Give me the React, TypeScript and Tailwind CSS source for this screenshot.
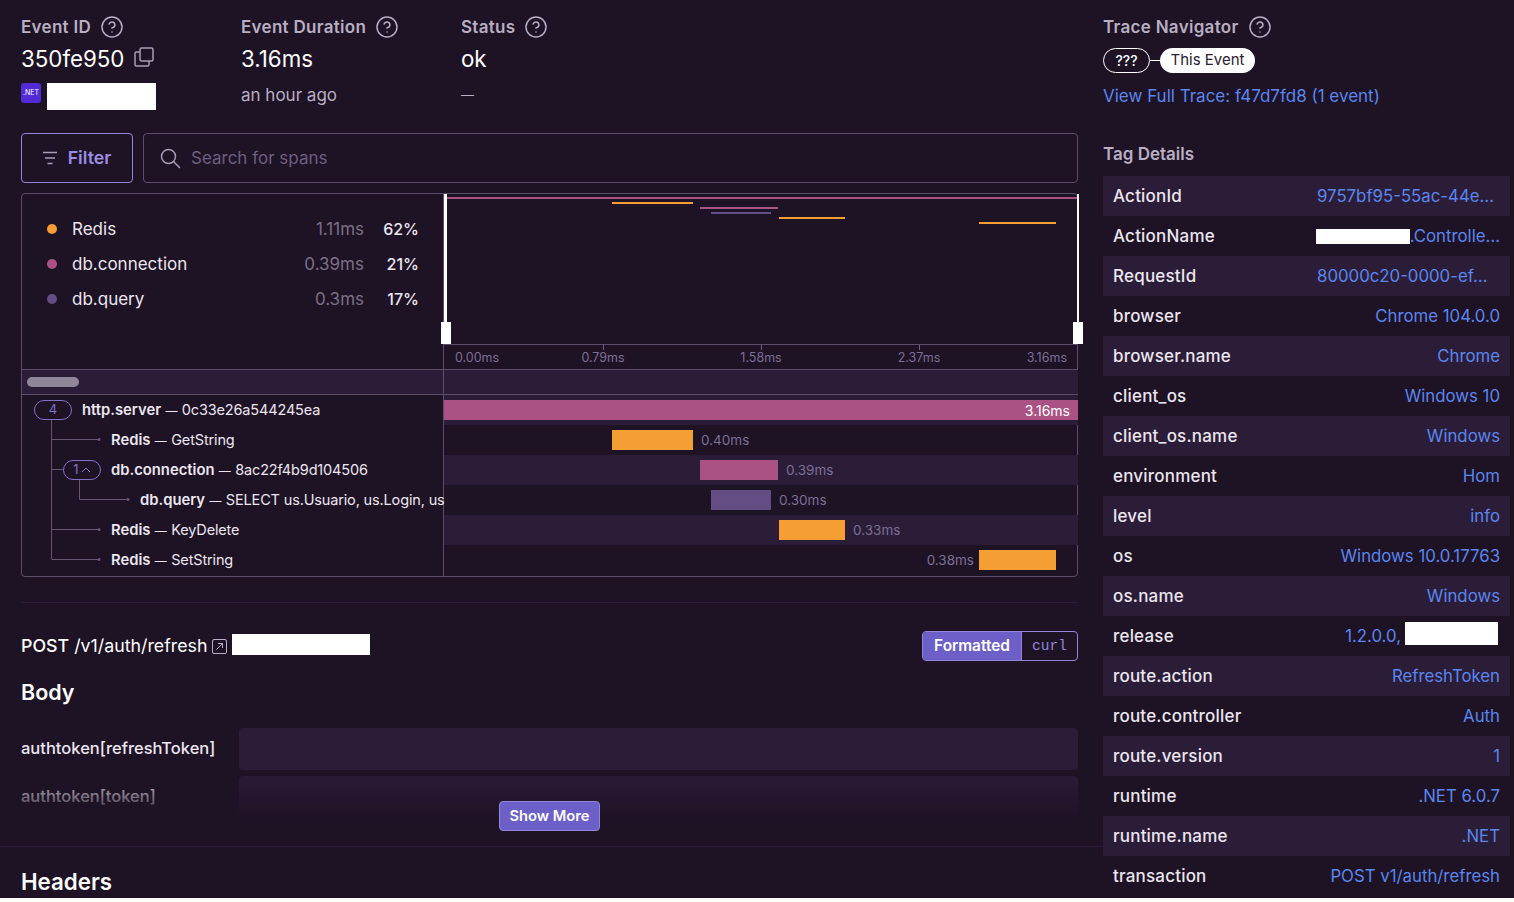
import { CircleHelp } from 'lucide-react';

const tags: { name: string; value: string }[] = [
  { name: 'ActionId', value: '9757bf95-55ac-44e…' },
  { name: 'ActionName', value: '.Controlle…' },
  { name: 'RequestId', value: '80000c20-0000-ef…' },
  { name: 'browser', value: 'Chrome 104.0.0' },
  { name: 'browser.name', value: 'Chrome' },
  { name: 'client_os', value: 'Windows 10' },
  { name: 'client_os.name', value: 'Windows' },
  { name: 'environment', value: 'Hom' },
  { name: 'level', value: 'info' },
  { name: 'os', value: 'Windows 10.0.17763' },
  { name: 'os.name', value: 'Windows' },
  { name: 'release', value: '1.2.0.0,' },
  { name: 'route.action', value: 'RefreshToken' },
  { name: 'route.controller', value: 'Auth' },
  { name: 'route.version', value: '1' },
  { name: 'runtime', value: '.NET 6.0.7' },
  { name: 'runtime.name', value: '.NET' },
  { name: 'transaction', value: 'POST v1/auth/refresh' },
];

const legend = [
  { name: 'Redis', time: '1.11ms', pct: '62%', dot: 'bg-[#f59e33]' },
  { name: 'db.connection', time: '0.39ms', pct: '21%', dot: 'bg-[#a95283]' },
  { name: 'db.query', time: '0.3ms', pct: '17%', dot: 'bg-[#634d84]' },
];

function Help() {
  return <CircleHelp size={24} strokeWidth={1.5} className="text-[#b8afc2] -my-[2px]" />;
}

function Label({ text }: { text: string }) {
  return (
    <div className="flex items-center gap-[9px] h-5 text-[17px] leading-6 font-semibold tracking-[0.3px] text-[#b8afc2]">
      {text}
      <Help />
    </div>
  );
}

function Minimap() {
  return (
    <svg width="634" height="150" className="block overflow-visible">
      <rect x="3" y="3" width="631" height="2" fill="#a95283" />
      <rect x="168" y="8" width="81" height="2" fill="#f59e33" />
      <rect x="256" y="13" width="78" height="2" fill="#a95283" />
      <rect x="267" y="18" width="60" height="2" fill="#634d84" />
      <rect x="335" y="23" width="66" height="2" fill="#f59e33" />
      <rect x="535" y="28" width="77" height="2" fill="#f59e33" />
      <rect x="0" y="0" width="3" height="128" fill="#fff" />
      <rect x="-3" y="128" width="10" height="22" fill="#fff" />
      <rect x="633" y="0" width="2" height="128" fill="#fff" />
      <rect x="629" y="128" width="10" height="22" fill="#fff" />
    </svg>
  );
}

function Axis() {
  const ticks = [
    { left: 'left-[159px]', text: '0.79ms' },
    { left: 'left-[317px]', text: '1.58ms' },
    { left: 'left-[475px]', text: '2.37ms' },
  ];
  return (
    <div className="relative h-[25px] border-t border-[#5c4e6a] text-[12.5px] text-[#7c6f96]">
      <span className="absolute left-[11px] top-[4px]">0.00ms</span>
      {ticks.map((t) => (
        <div key={t.text} className={`absolute top-0 ${t.left}`}>
          <div className="w-px h-[5px] bg-[#6f6080]" />
          <span className="absolute top-[4px] left-0 -translate-x-1/2">{t.text}</span>
        </div>
      ))}
      <span className="absolute right-[11px] top-[4px]">3.16ms</span>
    </div>
  );
}

// tree connectors, coordinates are relative to the tree column
function TreeLines() {
  return (
    <svg width="422" height="180" className="absolute left-0 top-0 text-[#655772]" fill="none" stroke="currentColor">
      <path d="M29.5 25V164.5M30 44.5H76M30 74.5H41M30 134.5H76M30 164.5H76M57.5 85V104.5H105" />
      <circle cx="77" cy="44.5" r="1.5" fill="currentColor" stroke="none" />
      <circle cx="77" cy="134.5" r="1.5" fill="currentColor" stroke="none" />
      <circle cx="77" cy="164.5" r="1.5" fill="currentColor" stroke="none" />
      <circle cx="106" cy="104.5" r="1.5" fill="currentColor" stroke="none" />
    </svg>
  );
}

function Pill({ children }: { children: React.ReactNode }) {
  return (
    <div className="relative flex items-center justify-center gap-[2px] w-[38px] h-5 rounded-full border border-[#7f72c9] bg-[#1e1225] text-[13px] text-[#7f72c9]">
      {children}
    </div>
  );
}

function SpanName({ bold, rest }: { bold: string; rest: string }) {
  return (
    <span className="whitespace-nowrap text-[14.5px] leading-5 text-[#ebe6ef]">
      <span className="text-[14.8px] font-semibold">{bold}</span>
      <span className="mx-[1px] text-[12px]"> — </span>
      <span className="tracking-[-0.15px]">{rest}</span>
    </span>
  );
}

function Tree() {
  return (
    <div className="relative h-[180px]">
      <TreeLines />
      <div className="relative flex items-center h-[30px] pl-[12px] gap-[10px]">
        <Pill>4</Pill>
        <SpanName bold="http.server" rest="0c33e26a544245ea" />
      </div>
      <div className="relative flex items-center h-[30px] pl-[89px]">
        <SpanName bold="Redis" rest="GetString" />
      </div>
      <div className="relative flex items-center h-[30px] pl-[41px] gap-[10px]">
        <Pill>
          1
          <svg width="10" height="6" viewBox="0 0 10 6" fill="none" stroke="#7f72c9" strokeWidth="1">
            <path d="M1 5L5 1L9 5" />
          </svg>
        </Pill>
        <SpanName bold="db.connection" rest="8ac22f4b9d104506" />
      </div>
      <div className="relative flex items-center h-[30px] pl-[118px]">
        <SpanName bold="db.query" rest="SELECT us.Usuario, us.Login, us" />
      </div>
      <div className="relative flex items-center h-[30px] pl-[89px]">
        <SpanName bold="Redis" rest="KeyDelete" />
      </div>
      <div className="relative flex items-center h-[30px] pl-[89px]">
        <SpanName bold="Redis" rest="SetString" />
      </div>
    </div>
  );
}

function Bars() {
  return (
    <div className="text-[13.5px] text-[#7c6f96]">
      <div className="flex items-center h-[30px] bg-[#2b1d38]">
        <div className="flex items-center justify-end w-full h-5 pr-2 bg-[#a95283] text-[14px] text-white">3.16ms</div>
      </div>
      <div className="flex items-center h-[30px]">
        <div className="ml-[168px] w-[81px] h-5 bg-[#f59e33]" />
        <span className="ml-2">0.40ms</span>
      </div>
      <div className="flex items-center h-[30px] bg-[#2b1d38]">
        <div className="ml-[256px] w-[78px] h-5 bg-[#a95283]" />
        <span className="ml-2">0.39ms</span>
      </div>
      <div className="flex items-center h-[30px]">
        <div className="ml-[267px] w-[60px] h-5 bg-[#634d84]" />
        <span className="ml-2">0.30ms</span>
      </div>
      <div className="flex items-center h-[30px] bg-[#2b1d38]">
        <div className="ml-[335px] w-[66px] h-5 bg-[#f59e33]" />
        <span className="ml-2">0.33ms</span>
      </div>
      <div className="flex items-center justify-end h-[30px] pr-[22px]">
        <span className="mr-[5px]">0.38ms</span>
        <div className="w-[77px] h-5 bg-[#f59e33]" />
      </div>
    </div>
  );
}

export default function App() {
  return (
    <div className="flex h-[898px] overflow-hidden bg-[#1e1225] font-[Inter,sans-serif] text-[#ebe6ef]">
      <div className="w-[1103px] shrink-0">
        <div className="pl-[21px] pr-[25px] pt-[17px]">
          <div className="flex">
            <div className="w-[220px]">
              <Label text="Event ID" />
              <div className="flex items-center gap-[10px] mt-2 h-7 text-[22.3px] leading-7 text-white">
                350fe950
                <svg width="20" height="20" viewBox="0 0 20 20" fill="none" stroke="#a89eb3" strokeWidth="1.5" className="mb-1">
                  <rect x="6" y="1" width="13" height="13" rx="1.5" />
                  <path d="M6 5H2.5A1.5 1.5 0 0 0 1 6.5V17.5A1.5 1.5 0 0 0 2.5 19H13.5A1.5 1.5 0 0 0 15 17.5V14" />
                </svg>
              </div>
              <div className="flex items-start gap-[6px] mt-[10px] h-[27px]">
                <div className="flex items-center justify-center w-5 h-5 rounded-[3px] bg-[#522bd7] text-[7px] text-white">.NET</div>
                <div className="w-[109px] h-[27px] bg-white" />
              </div>
            </div>
            <div className="w-[220px]">
              <Label text="Event Duration" />
              <div className="mt-2 h-7 text-[22.3px] leading-7 text-white">3.16ms</div>
              <div className="mt-3 h-5 text-[17px] leading-5 text-[#b8afc2]">an hour ago</div>
            </div>
            <div>
              <Label text="Status" />
              <div className="mt-2 h-7 text-[22.3px] leading-7 text-white">ok</div>
              <div className="mt-3 h-5 text-[13px] leading-5 text-[#b8afc2]">—</div>
            </div>
          </div>

          <div className="flex gap-[10px] mt-[23px]">
            <button className="flex items-center justify-center gap-[11px] w-[112px] h-[50px] rounded-[4px] border border-[#9386d8] text-[17.8px] leading-6 font-semibold text-[#9a8ee0]">
              <svg width="14" height="14" viewBox="0 0 14 14" fill="none" stroke="#a89eb3" strokeWidth="1.5">
                <path d="M0 1.5H14M2 7H12M4.5 12.5H9.5" />
              </svg>
              Filter
            </button>
            <div className="flex flex-1 items-center gap-[10px] h-[50px] px-[16px] rounded-[4px] border border-[#5c4e6a] text-[17px] leading-6 text-[#6e5f80]">
              <svg width="21" height="21" viewBox="0 0 21 21" fill="none" stroke="#a89eb3" strokeWidth="1.5">
                <circle cx="8.5" cy="8.5" r="7" />
                <path d="M13.5 13.5L20 20" />
              </svg>
              Search for spans
            </div>
          </div>

          <div className="flex mt-[10px] h-[384px] rounded-[4px] border border-[#5c4e6a]">
            <div className="w-[422px] shrink-0 border-r border-[#5c4e6a]">
              <div className="h-[175px] pt-[17px] pl-[25px] pr-[24px]">
                {legend.map((l) => (
                  <div key={l.name} className="flex items-center h-[35px] text-[17px] leading-6">
                    <div className={`w-[10px] h-[10px] rounded-full ${l.dot}`} />
                    <span className="ml-[15px] flex-1">{l.name}</span>
                    <span className="text-[#7c6f84]">{l.time}</span>
                    <span className="w-[55px] text-right text-[16px] font-medium">{l.pct}</span>
                  </div>
                ))}
              </div>
              <div className="flex items-center h-[26px] px-[5px] border-y border-[#5c4e6a] bg-[#2b1d38]">
                <div className="w-[52px] h-[10px] rounded-full bg-[#8f8799]" />
              </div>
              <Tree />
            </div>
            <div className="flex-1">
              <Minimap />
              <Axis />
              <div className="h-[26px] border-y border-[#5c4e6a] bg-[#2b1d38]" />
              <Bars />
            </div>
          </div>

          <div className="mt-[25px] h-px bg-[#2b1d38]" />
        </div>

        <div className="relative h-[244px] pl-[21px] pr-[25px] pt-[28px] border-b border-[#2b1d38]">
          <div className="flex items-center justify-between h-[30px]">
            <div className="flex items-center gap-[5px] text-[17.8px] leading-6 text-white">
              <span><span className="font-medium">POST</span> /v1/auth/refresh</span>
              <svg width="15" height="15" viewBox="0 0 15 15" fill="none" stroke="#b8afc2" strokeWidth="1">
                <rect x="0.5" y="0.5" width="14" height="14" rx="1.5" />
                <path d="M4.5 10.5L10.5 4.5M6 4.5H10.5V9" />
              </svg>
              <div className="w-[138px] h-[21px] mb-[4px] bg-white" />
            </div>
            <div className="flex h-[30px] w-[156px] rounded-[4px] border border-[#9386d8] overflow-hidden">
              <div className="flex items-center justify-center w-[98px] bg-[#6c5fc7] text-[15.4px] font-semibold text-white">Formatted</div>
              <div className="flex flex-1 items-center justify-center pt-[2px] border-l border-[#9386d8] font-['Liberation_Mono',monospace] text-[14.5px] text-[#9386d8]">curl</div>
            </div>
          </div>
          <div className="mt-[15px] h-8 text-[21.5px] leading-8 font-semibold text-white">Body</div>
          <div className="flex items-center gap-[24px] mt-[20px] h-[42px]">
            <div className="w-[194px] -mt-[2px] text-[16.5px] font-medium whitespace-nowrap">authtoken[refreshToken]</div>
            <div className="flex-1 h-full rounded-[4px] bg-[#2b1d38]" />
          </div>
          <div className="flex items-center gap-[24px] mt-[6px] h-[42px]">
            <div className="w-[194px] -mt-[2px] text-[16.5px] font-medium whitespace-nowrap">authtoken[token]</div>
            <div className="flex-1 h-full rounded-[4px] bg-[#2b1d38]" />
          </div>
          <div className="absolute left-[21px] right-[25px] bottom-0 h-[76px] pt-[31px] flex justify-center bg-gradient-to-b from-transparent to-[#1e1225] to-65%">
            <button className="w-[101px] h-[30px] rounded-[4px] border border-[#9386d8] bg-[#6c5fc7] text-[14.7px] font-semibold text-white">Show More</button>
          </div>
        </div>

        <div className="pl-[21px] mt-[19px] h-8 text-[22.3px] leading-8 font-semibold text-white">Headers</div>
      </div>

      <div className="w-[407px] shrink-0 pt-[17px]">
        <Label text="Trace Navigator" />
        <div className="flex items-center mt-[11px] h-[25px] text-[15px]">
          <div className="flex items-center justify-center w-[47px] h-[25px] rounded-full border border-white text-[14px] text-white font-medium">???</div>
          <div className="w-[10px] h-px bg-white" />
          <div className="flex items-center justify-center w-[95px] h-[25px] rounded-full bg-white text-[#2b2233]">This Event</div>
        </div>
        <div className="mt-[13px] h-5 text-[17px] leading-5 text-[#5b86ee]">View Full Trace: f47d7fd8 (1 event)</div>
        <div className="mt-[38px] h-5 text-[17px] leading-5 font-semibold text-[#b8afc2]">Tag Details</div>
        <div className="mt-[12px]">
          {tags.map((t, i) => (
            <div
              key={t.name}
              className={`flex items-center justify-between h-10 px-[10px] text-[16.8px] leading-6 ${i % 2 === 0 ? 'bg-[#2b1d38]' : ''}`}
            >
              <span className="text-[17px] font-medium tracking-[0.2px] text-[#ebe6ef]">{t.name}</span>
              {t.name === 'ActionName' ? (
                <span className="flex items-center text-[#5b86ee]">
                  <span className="w-[94px] h-[15px] bg-white" />
                  {t.value}
                </span>
              ) : t.name === 'release' ? (
                <span className="flex items-center gap-[4px] mr-[2px] text-[#5b86ee]">
                  {t.value}
                  <span className="w-[93px] h-[23px] mb-[5px] bg-white" />
                </span>
              ) : t.value.endsWith('…') ? (
                <span className="w-[183px] text-[#5b86ee]">{t.value}</span>
              ) : (
                <span className="text-[#5b86ee]">{t.value}</span>
              )}
            </div>
          ))}
        </div>
      </div>
    </div>
  );
}
